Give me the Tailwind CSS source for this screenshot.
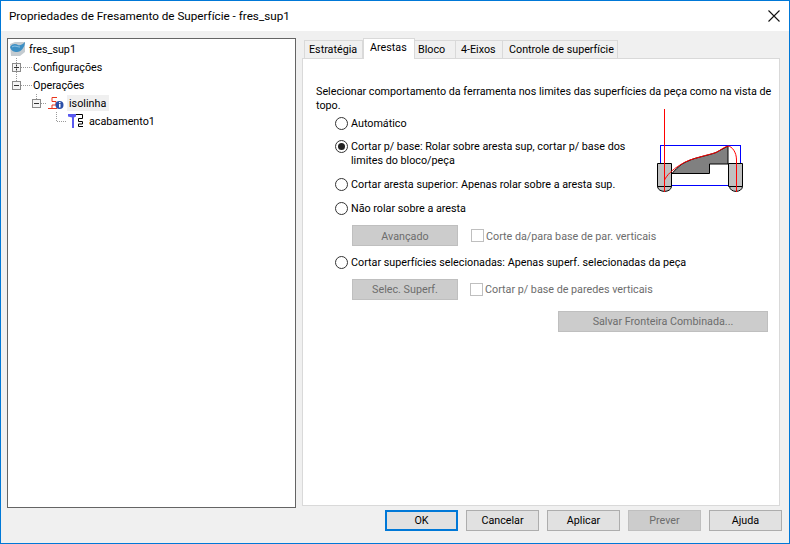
<!DOCTYPE html>
<html><head><meta charset="utf-8"><script src="https://cdn.jsdelivr.net/npm/@tailwindcss/browser@4"></script></head>
<body class="m-0 overflow-hidden">
<div class="w-[790px] h-[544px] flex flex-col border border-[#0078d7] bg-[#f0f0f0] font-['Roboto',sans-serif] text-[10.75px] leading-[14px] text-black">
  <div class="h-[30px] bg-white flex items-center justify-between pl-[8px] pr-[8px] shrink-0">
    <span class="text-[11.7px]">Propriedades de Fresamento de Superfície - fres_sup1</span>
    <svg width="14" height="14" viewBox="0 0 14 14"><path d="M1.5 1.5L12.5 12.5M12.5 1.5L1.5 12.5" stroke="#111" stroke-width="1.1"/></svg>
  </div>
  <div class="flex flex-1 pl-[6px] pt-[7px] pr-[9px] min-h-0">
    <div class="relative w-[289px] h-[470px] bg-white border border-[#646464] pt-[1px] shrink-0">
      <svg class="absolute left-0 top-0" width="120" height="100" fill="none" stroke="#9a9a9a" stroke-dasharray="1 1">
        <path d="M8.500 19V42M13 28.500H24M13 46.500H24M28.500 55V60M33 64.500H39M48.500 73V83M49 82.500H59"/>
      </svg>
      <div class="h-[18px] flex items-center pl-[1px]">
        <svg width="17" height="16" viewBox="0 0 17 16" class="shrink-0"><path d="M1 3L6 1H16V11L11 15H2Z" fill="#c4cbd0"/><path d="M1 6C4 2 7 3 9 4C11 5 14 3 16 1C16 6 12 11 8 11C5 11 2 10 1 6Z" fill="#3d8fc4"/><path d="M3 6C6 4 8 6 11 6" stroke="#8fc4e6" fill="none"/></svg>
        <span class="ml-[3px] pt-[2px]">fres_sup1</span>
      </div>
      <div class="h-[18px] flex items-center pl-[4px]">
        <span class="w-[9px] h-[9px] border border-[#8a8a8a] bg-[#f4f4f4] flex items-center justify-center shrink-0"><svg width="7" height="7"><path d="M1 3.500H6M3.500 1V6" stroke="#333"/></svg></span>
        <span class="ml-[12px] pt-[2px]">Configurações</span>
      </div>
      <div class="h-[18px] flex items-center pl-[4px]">
        <span class="w-[9px] h-[9px] border border-[#8a8a8a] bg-[#f4f4f4] flex items-center justify-center shrink-0"><svg width="7" height="7"><path d="M1 3.500H6" stroke="#333"/></svg></span>
        <span class="ml-[12px] pt-[2px]">Operações</span>
      </div>
      <div class="h-[18px] flex items-center pl-[24px]">
        <span class="w-[9px] h-[9px] border border-[#8a8a8a] bg-[#f4f4f4] flex items-center justify-center shrink-0"><svg width="7" height="7"><path d="M1 3.500H6" stroke="#333"/></svg></span>
        <svg width="18" height="16" viewBox="0 0 18 16" class="ml-[6px] shrink-0"><path d="M5 2.500H10M5 2.500V6.500H9V10H5V13.500M1 13.500H10" fill="none" stroke="#e8361e" stroke-width="1"/><circle cx="12.500" cy="10" r="4" fill="#2a4fa8"/><rect x="12" y="9" width="1.500" height="3.500" fill="#fff"/><rect x="12" y="7" width="1.500" height="1.200" fill="#fff"/></svg>
        <span class="ml-[2px] bg-[#f0f0f0] h-[16px] w-[42px] pl-[2px] leading-[18px]">isolinha</span>
      </div>
      <div class="h-[18px] flex items-center pl-[60px]">
        <svg width="16" height="16" viewBox="0 0 16 16" class="shrink-0"><path d="M0 1H8V3.500L6 4.500V15H4V4.500L0 3.500Z" fill="#5a5af0"/><path d="M8 1.500H14.500V5.500H10.500V8.500H14.500V11H10.500V13.500H15" fill="none" stroke="#000" stroke-width="1"/></svg>
        <span class="ml-[5px] pt-[2px]">acabamento1</span>
      </div>
    </div>
    <div class="ml-[6px] flex-1 flex flex-col min-w-0">
      <div class="h-[20px] flex items-end pl-[2px] shrink-0 relative z-10">
        <div class="w-[59px] h-[18px] bg-[#f0f0f0] border border-b-0 border-[#d9d9d9] pl-[4px] pt-[2px] whitespace-nowrap">Estratégia</div>
        <div class="w-[52px] h-[21px] mb-[-1px] bg-white border border-b-0 border-[#d9d9d9] pl-[6px] pt-[2px] whitespace-nowrap">Arestas</div>
        <div class="w-[41px] h-[18px] bg-[#f0f0f0] border-t border-r border-[#d9d9d9] pl-[3px] pt-[2px] whitespace-nowrap">Bloco</div>
        <div class="w-[47px] h-[18px] bg-[#f0f0f0] border-t border-r border-[#d9d9d9] pl-[5px] pt-[2px] whitespace-nowrap">4-Eixos</div>
        <div class="w-[115px] h-[18px] bg-[#f0f0f0] border-t border-r border-[#d9d9d9] pl-[6px] pt-[2px] whitespace-nowrap">Controle de superfície</div>
      </div>
      <div class="relative w-[478px] h-[448px] bg-white border border-[#d9d9d9] pl-[13px] pt-[26px]">
        <p class="w-[456px]">Selecionar comportamento da ferramenta nos limites das superfícies da peça como na vista de topo.</p>
        <svg class="absolute left-[347px] top-[49px]" width="100" height="90" viewBox="0 0 100 90" fill="none">
          <path d="M7.500 55.500H21.500V78.500H7.500ZM78.500 55.500H92.500V78.500H78.500Z" fill="#c0c0c0" stroke="#000"/>
          <path d="M7.500 78.500C8 85 21 85 21.500 78.500ZM79.500 78.500C80 85 92 85 92.500 78.500Z" fill="#c0c0c0" stroke="#000"/>
          <path d="M22 65.500C25 62 28 59 32 56C38 52.500 44 50.500 50 49C56 47.500 62 46 66 44.500C70 42.500 74 40 78 38V56H59.500V65.500Z" fill="#808080" stroke="#000"/>
          <path d="M10.500 55V37.500H90.500V55M22 77.500H78" stroke="#0000ff" shape-rendering="crispEdges"/>
          <path d="M14.500 1V84" stroke="#ff0000" shape-rendering="crispEdges"/>
          <path d="M14.500 72C17 67 22 62 30 57C36 53 42 51 50 49C56 47 62 46 66 44.500C70 42.500 74 39 78 38C82 38.500 86.500 44 86.500 52V84" stroke="#ff0000"/>
        </svg>
        <div class="flex flex-col mt-[4px] pl-[19px]">
          <label class="flex items-start h-[14px]"><span class="w-[13px] h-[13px] rounded-full border border-[#333] shrink-0"></span><span class="ml-[3px]">Automático</span></label>
          <label class="flex items-start mt-[9px] h-[28px]"><span class="w-[13px] h-[13px] rounded-full border border-[#333] shrink-0 flex items-center justify-center"><span class="w-[7px] h-[7px] rounded-full bg-[#222]"></span></span><span class="ml-[3px] w-[290px]">Cortar p/ base: Rolar sobre aresta sup, cortar p/ base dos limites do bloco/peça</span></label>
          <label class="flex items-start mt-[10px] h-[14px]"><span class="w-[13px] h-[13px] rounded-full border border-[#333] shrink-0"></span><span class="ml-[3px]">Cortar aresta superior: Apenas rolar sobre a aresta sup.</span></label>
          <label class="flex items-start mt-[10px] h-[14px]"><span class="w-[13px] h-[13px] rounded-full border border-[#333] shrink-0"></span><span class="ml-[3px]">Não rolar sobre a aresta</span></label>
          <div class="flex items-center mt-[9px] ml-[17px] text-[#6d6d6d]">
            <div class="w-[106px] h-[21px] bg-[#cccccc] border border-[#bfbfbf] flex items-center justify-center pt-[2px]">Avançado</div>
            <span class="ml-[13px] w-[13px] h-[13px] border border-[#bfbfbf] shrink-0"></span><span class="ml-[2px] pt-[2px]">Corte da/para base de par. verticais</span>
          </div>
          <label class="flex items-start mt-[10px] h-[14px]"><span class="w-[13px] h-[13px] rounded-full border border-[#333] shrink-0"></span><span class="ml-[3px]">Cortar superfícies selecionadas: Apenas superf. selecionadas da peça</span></label>
          <div class="flex items-center mt-[9px] ml-[17px] text-[#6d6d6d]">
            <div class="w-[106px] h-[21px] bg-[#cccccc] border border-[#bfbfbf] flex items-center justify-center pt-[1px]">Selec. Superf.</div>
            <span class="ml-[12px] w-[13px] h-[13px] border border-[#bfbfbf] shrink-0"></span><span class="ml-[2px] pt-[1px]">Cortar p/ base de paredes verticais</span>
          </div>
          <div class="flex justify-end mt-[11px] pr-[11px] text-[#6d6d6d]">
            <div class="w-[210px] h-[21px] bg-[#cccccc] border border-[#bfbfbf] flex items-center justify-center pt-[1px]">Salvar Fronteira Combinada...</div>
          </div>
        </div>
      </div>
    </div>
  </div>
  <div class="h-[35px] flex justify-end items-start gap-[8px] pr-[7px] pt-[2px] shrink-0">
    <div class="w-[73px] h-[21px] bg-[#e1e1e1] border-2 border-[#0078d7] flex items-center justify-center pt-[1px]">OK</div>
    <div class="w-[73px] h-[21px] bg-[#e1e1e1] border border-[#adadad] flex items-center justify-center pt-[1px]">Cancelar</div>
    <div class="w-[73px] h-[21px] bg-[#e1e1e1] border border-[#adadad] flex items-center justify-center pt-[1px]">Aplicar</div>
    <div class="w-[73px] h-[21px] bg-[#cccccc] border border-[#bfbfbf] text-[#6d6d6d] flex items-center justify-center pt-[1px]">Prever</div>
    <div class="w-[73px] h-[21px] bg-[#e1e1e1] border border-[#adadad] flex items-center justify-center pt-[1px]">Ajuda</div>
  </div>
</div>
</body></html>
